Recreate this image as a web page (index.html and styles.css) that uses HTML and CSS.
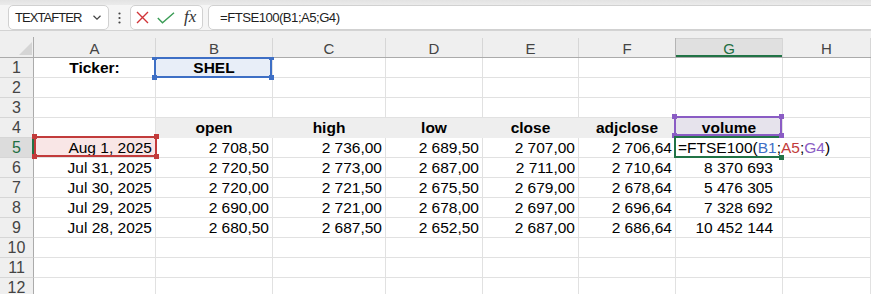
FILE: index.html
```html
<!DOCTYPE html>
<html>
<head>
<meta charset="utf-8">
<link rel="stylesheet" href="styles.css">
</head>
<body>
<div class="toolbar">
  <div class="namebox"><span>TEXTAFTER</span><svg class="chev" width="8" height="5" viewBox="0 0 8 5"><path d="M0.5 0.8 L4 4.2 L7.5 0.8" fill="none" stroke="#444" stroke-width="1.2"/></svg></div>
  <div class="dots"><svg width="3" height="12" viewBox="0 0 3 12"><circle cx="1.5" cy="1.5" r="1.1" fill="#444"/><circle cx="1.5" cy="6" r="1.1" fill="#444"/><circle cx="1.5" cy="10.5" r="1.1" fill="#444"/></svg></div>
  <div class="btns">
    <svg class="ix" width="13" height="13" viewBox="0 0 13 13"><path d="M1 1 L12 12 M12 1 L1 12" stroke="#d13438" stroke-width="1.4" fill="none"/></svg>
    <svg class="ic" width="18" height="12" viewBox="0 0 18 12"><path d="M0.8 6 L5.5 10.8 L17 0.8" stroke="#3a9c55" stroke-width="1.4" fill="none"/></svg>
    <span class="fx">fx</span>
  </div>
  <div class="fbar">=FTSE100(B1;A5;G4)</div>
</div>

<div class="sheet">
  <div class="corner"><svg width="34" height="26" viewBox="0 0 34 26"><path d="M19 24 L32 24 L32 11 Z" fill="#d5d5d5"/><path d="M33.5 6 V26" stroke="#ababab" stroke-width="1"/></svg></div>
  <div class="ch"><span>A</span></div>
  <div class="ch"><span>B</span></div>
  <div class="ch"><span>C</span></div>
  <div class="ch"><span>D</span></div>
  <div class="ch"><span>E</span></div>
  <div class="ch pre"><span>F</span></div>
  <div class="ch act"><span>G</span></div>
  <div class="ch"><span>H</span></div>

  <!-- row 1 -->
  <div class="rh">1</div>
  <div class="c m">Ticker:</div>
  <div class="c m sblue">SHEL<i class="rng blue"><b class="h tl"></b><b class="h tr"></b><b class="h bl"></b><b class="h br"></b></i></div>
  <div class="c"></div><div class="c"></div><div class="c"></div><div class="c"></div><div class="c"></div><div class="c"></div>

  <!-- row 2 -->
  <div class="rh">2</div>
  <div class="c"></div><div class="c"></div><div class="c"></div><div class="c"></div><div class="c"></div><div class="c"></div><div class="c"></div><div class="c"></div>

  <!-- row 3 -->
  <div class="rh">3</div>
  <div class="c"></div><div class="c"></div><div class="c"></div><div class="c"></div><div class="c"></div><div class="c"></div><div class="c"></div><div class="c"></div>

  <!-- row 4 -->
  <div class="rh">4</div>
  <div class="c"></div>
  <div class="c m fill">open</div>
  <div class="c m fill">high</div>
  <div class="c m fill">low</div>
  <div class="c m fill">close</div>
  <div class="c m fill">adjclose</div>
  <div class="c m spur">volume<i class="rng pur"><b class="h tl"></b><b class="h tr"></b><b class="h bl"></b><b class="h br"></b></i></div>
  <div class="c"></div>

  <!-- row 5 -->
  <div class="rh act">5</div>
  <div class="c r sred">Aug 1, 2025<i class="rng red"><b class="h tl"></b><b class="h tr"></b><b class="h bl"></b><b class="h br"></b></i></div>
  <div class="c r">2 708,50</div>
  <div class="c r">2 736,00</div>
  <div class="c r">2 689,50</div>
  <div class="c r">2 707,00</div>
  <div class="c r">2 706,64</div>
  <div class="c edit">=FTSE100(<span class="fb">B1</span>;<span class="fr">A5</span>;<span class="fp">G4</span>)<i class="rng grn"></i><b class="fh"></b></div>
  <div class="c"></div>

  <!-- row 6 -->
  <div class="rh">6</div>
  <div class="c r">Jul 31, 2025</div>
  <div class="c r">2 720,50</div>
  <div class="c r">2 773,00</div>
  <div class="c r">2 687,00</div>
  <div class="c r">2 711,00</div>
  <div class="c r">2 710,64</div>
  <div class="c r vol">8 370 693</div>
  <div class="c"></div>

  <!-- row 7 -->
  <div class="rh">7</div>
  <div class="c r">Jul 30, 2025</div>
  <div class="c r">2 720,00</div>
  <div class="c r">2 721,50</div>
  <div class="c r">2 675,50</div>
  <div class="c r">2 679,00</div>
  <div class="c r">2 678,64</div>
  <div class="c r vol">5 476 305</div>
  <div class="c"></div>

  <!-- row 8 -->
  <div class="rh">8</div>
  <div class="c r">Jul 29, 2025</div>
  <div class="c r">2 690,00</div>
  <div class="c r">2 721,00</div>
  <div class="c r">2 678,00</div>
  <div class="c r">2 697,00</div>
  <div class="c r">2 696,64</div>
  <div class="c r vol">7 328 692</div>
  <div class="c"></div>

  <!-- row 9 -->
  <div class="rh">9</div>
  <div class="c r">Jul 28, 2025</div>
  <div class="c r">2 680,50</div>
  <div class="c r">2 687,50</div>
  <div class="c r">2 652,50</div>
  <div class="c r">2 687,00</div>
  <div class="c r">2 686,64</div>
  <div class="c r vol">10 452 144</div>
  <div class="c"></div>

  <!-- row 10 -->
  <div class="rh">10</div>
  <div class="c"></div><div class="c"></div><div class="c"></div><div class="c"></div><div class="c"></div><div class="c"></div><div class="c"></div><div class="c"></div>

  <!-- row 11 -->
  <div class="rh">11</div>
  <div class="c"></div><div class="c"></div><div class="c"></div><div class="c"></div><div class="c"></div><div class="c"></div><div class="c"></div><div class="c"></div>

  <!-- row 12 -->
  <div class="rh">12</div>
  <div class="c"></div><div class="c"></div><div class="c"></div><div class="c"></div><div class="c"></div><div class="c"></div><div class="c"></div><div class="c"></div>
</div>
</body>
</html>
```

FILE: styles.css
```css
* { box-sizing: border-box; }
html, body { margin: 0; height: 294px; overflow: hidden; background: #fff; }
body { font-family: "Liberation Sans", Arial, sans-serif; color: #000; }

/* ---------- formula toolbar ---------- */
.toolbar {
  display: flex;
  height: 30px;
  padding-top: 5px;
  background: linear-gradient(#e3e3e3 0, #ebebeb 5px, #f5f5f5 5px);
  overflow: hidden;
}
.namebox {
  width: 101px;
  margin-left: 8px;
  background: #fff;
  border: 1px solid #d1d1d1;
  border-radius: 5px;
  display: flex;
  align-items: center;
  justify-content: space-between;
  padding: 0 7px 0 6px;
  font-size: 13px;
  letter-spacing: -0.95px;
  color: #1f1f1f;
}
.chev { display: block; }
.dots { width: 21px; display: flex; align-items: center; justify-content: center; }
.dots svg { display: block; }
.btns {
  width: 73px;
  background: #fff;
  border: 1px solid #d1d1d1;
  border-radius: 5px;
  display: flex;
  align-items: center;
  padding-left: 5px;
}
.ix { display: block; }
.ic { display: block; margin-left: 8px; }
.fx {
  margin-left: 9px;
  font-family: "Liberation Serif", "Times New Roman", serif;
  font-style: italic;
  font-size: 17px;
  color: #333;
  line-height: 1;
  margin-top: -2px;
}
.fbar {
  flex: 1;
  margin-left: 5px;
  margin-right: -8px;
  background: #fff;
  border: 1px solid #d1d1d1;
  border-radius: 5px;
  display: flex;
  align-items: center;
  padding-left: 11px;
  font-size: 13.2px;
  letter-spacing: -0.55px;
  color: #1f1f1f;
}

/* ---------- sheet grid ---------- */
.sheet {
  display: grid;
  grid-template-columns: 34px 122px 117px 113px 97px 96px 97px 107px 1fr;
  grid-template-rows: 27px;
  grid-auto-rows: 20px;
  border-top: 1px solid #d3d3d3;
}
.corner { background: #efefef; border-bottom: 1px solid #ababab; }
.corner svg { display: block; }
.ch {
  background: #efefef;
  border-bottom: 1px solid #ababab;
  padding-top: 7px;
  display: flex;
}
.ch span {
  flex: 1;
  border-right: 1px solid #d6d6d6;
  text-align: center;
  font-size: 15px;
  line-height: 21px;
  color: #444;
}
.ch.pre span { border-right-color: #b4b4b4; }
.ch.act span {
  background: #e0e0e0;
  color: #1e6e42;
  box-shadow: inset 0 -2px 0 #217346, inset 0 1px 0 #d0d0d0;
}
.rh {
  background: #efefef;
  border-right: 1px solid #ababab;
  border-bottom: 1px solid #d6d6d6;
  text-align: center;
  font-size: 16px;
  line-height: 19px;
  color: #444;
}
.rh.act {
  background: #dcdcdc;
  color: #1e6e42;
  border-right-color: #217346;
  box-shadow: inset -1px 0 0 #217346;
}
.c {
  position: relative;
  border-right: 1px solid #e1e1e1;
  border-bottom: 1px solid #e1e1e1;
  font-size: 15.5px;
  line-height: 19px;
  padding: 0 3px;
  white-space: nowrap;
}
.r { text-align: right; }
.m { text-align: center; font-weight: bold; }
.fill { background: #eeeeee; border-color: #eeeeee; }
.vol { padding-right: 9px; }

.sblue { background: #e8eef8; }
.spur { background: #e6e3ec; }
.sred { background: #f9e6e6; }

.edit {
  border-right-color: transparent;
  padding-left: 2px;
  z-index: 3;
  background: #fff;
}
.fb { color: #3e6fc5; }
.fr { color: #c23b3b; }
.fp { color: #8a5cc4; }

/* range highlight overlays */
.rng {
  position: absolute;
  border: 2px solid;
  z-index: 2;
  pointer-events: none;
}
.rng.blue { left: -2px; top: -1px; right: 0; bottom: -1px; border-color: #3e6fc5; color: #3e6fc5; }
.rng.pur  { left: -2px; top: -2px; right: 0; bottom: 1px; border-color: #8a5cc4; color: #8a5cc4; }
.rng.red  { left: 0; top: -2px; right: -2px; bottom: 0; border-color: #c23b3b; color: #c23b3b; }
.rng.grn  { left: -2px; top: -2px; right: 3px; bottom: -1px; border-color: #217346; border-right: none; }
.h {
  position: absolute;
  width: 5px;
  height: 5px;
  background: currentColor;
}
.h.tl { left: -4px; top: -4px; }
.h.tr { right: -4px; top: -4px; }
.h.bl { left: -4px; bottom: -4px; }
.h.br { right: -4px; bottom: -4px; }
.rng.blue .h.tl, .rng.blue .h.tr { top: -2px; height: 3px; }
.fh {
  position: absolute;
  left: 103px;
  top: 17px;
  width: 5px;
  height: 5px;
  background: #217346;
  z-index: 3;
}
```
